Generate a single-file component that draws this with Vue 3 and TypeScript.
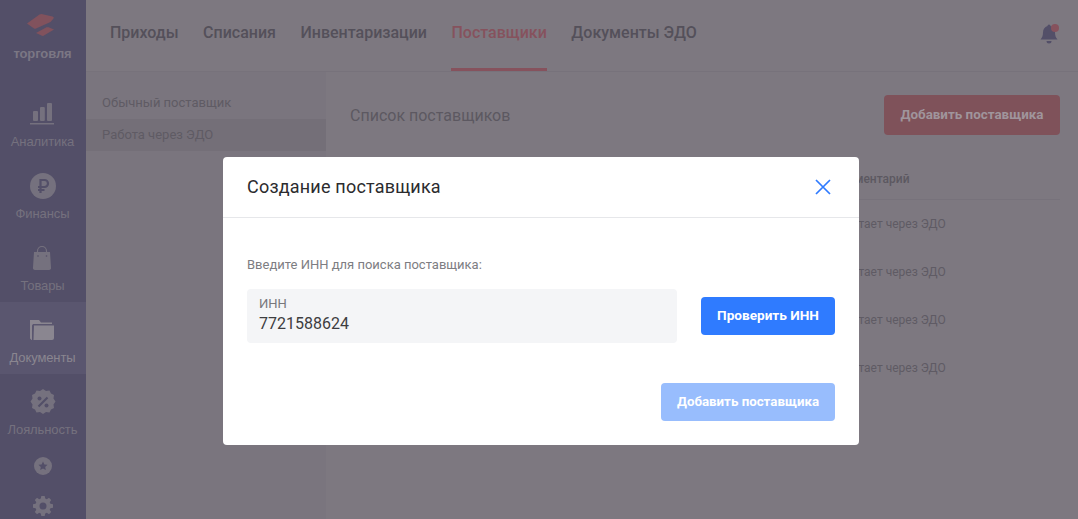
<script setup lang="ts">
const tabs = [
  { label: 'Приходы', active: false },
  { label: 'Списания', active: false },
  { label: 'Инвентаризации', active: false },
  { label: 'Поставщики', active: true },
  { label: 'Документы ЭДО', active: false },
]
const nav = [
  { label: 'Аналитика', icon: 'bars', active: false },
  { label: 'Финансы', icon: 'coin', active: false },
  { label: 'Товары', icon: 'bag', active: false },
  { label: 'Документы', icon: 'folder', active: true },
  { label: 'Лояльность', icon: 'percent', active: false },
]
const rows = [1, 2, 3, 4]
</script>

<template>
  <div class="app">
    <aside class="sidebar">
      <div class="logo">
        <svg width="36" height="36" viewBox="0 0 36 36">
          <path d="M2 11.500 L14.500 2.500 Q15.500 2 16.500 2 L27.500 4.500 Q29.500 5 28.500 6.500 L25.500 10 L11 16.500 Q10 17 9 16.500 Z" fill="#81525d" />
          <path d="M11 21 L21.500 15.300 Q22.500 15 23.500 15.300 L29 17.500 L18.500 23.800 Q18 24 17 23.800 Z" fill="#81525d" />
        </svg>
        <span class="logo-text">торговля</span>
      </div>
      <nav class="nav">
        <a v-for="item in nav" :key="item.label" class="nav-item" :class="{ active: item.active }">
          <svg v-if="item.icon === 'bars'" width="26" height="26" viewBox="0 0 26 26" class="nav-icon">
            <rect x="3" y="10" width="5" height="10" rx="1" />
            <rect x="10" y="6" width="4.800" height="14" rx="1" />
            <rect x="17" y="2" width="5" height="18" rx="1" />
            <rect x="0" y="22" width="24" height="1.500" />
          </svg>
          <svg v-else-if="item.icon === 'coin'" width="26" height="26" viewBox="0 0 26 26" class="nav-icon">
            <circle cx="13" cy="13" r="13" />
            <path d="M10.500 20V7h4a3.500 3.500 0 0 1 0 7H8M8 17h6.500" fill="none" stroke="#534f68" stroke-width="2.200" />
          </svg>
          <svg v-else-if="item.icon === 'bag'" width="26" height="26" viewBox="0 0 26 26" class="nav-icon">
            <path d="M7.500 7V6a4.500 4.500 0 0 1 9 0V7" fill="none" stroke="currentColor" stroke-width="1.200" />
            <path d="M4 7h16l1 15.500a2 2 0 0 1-2 2.500H5a2 2 0 0 1-2-2.500z" />
            <circle cx="8" cy="11" r=".8" fill="#534f68" />
            <circle cx="16.500" cy="11" r=".8" fill="#534f68" />
          </svg>
          <svg v-else-if="item.icon === 'folder'" width="26" height="26" viewBox="0 0 26 26" class="nav-icon">
            <path d="M0 3h9l2 2.500h11V7H3L2 8.500V23H1.500L0 21.500z" />
            <path d="M4 8.500h20v12.500a2 2 0 0 1-2 2H3.500z" />
          </svg>
          <svg v-else width="26" height="26" viewBox="0 0 26 26" class="nav-icon">
            <path d="M13 0l3 2 3.500-.500 1.500 3 3 1.500-.500 3.500 2 3-2 3 .500 3.500-3 1.500-1.500 3-3.500-.500-3 2-3-2-3.500.500-1.500-3-3-1.500.500-3.500-2-3 2-3-.500-3.500 3-1.500 1.500-3 3.500.500z" />
            <path d="M17.500 8.500l-9 9" stroke="#534f68" stroke-width="2.200" />
            <circle cx="9.500" cy="9.500" r="2" fill="#534f68" />
            <circle cx="16.500" cy="16.500" r="2" fill="#534f68" />
          </svg>
          <span class="nav-label">{{ item.label }}</span>
        </a>
      </nav>
      <div class="nav-extra">
        <svg width="18" height="18" viewBox="0 0 18 18" class="nav-icon">
          <circle cx="9" cy="9" r="9" />
          <path d="M9 4.500l1.400 2.900 3.100.4-2.300 2.200.6 3.100L9 11.600l-2.800 1.500.6-3.100-2.300-2.200 3.100-.4z" fill="#534f68" />
        </svg>
        <svg width="20" height="20" viewBox="0 0 20 20" class="nav-icon">
          <path fill-rule="evenodd" d="M8.300 0h3.400l.5 2.600 1.600.7 2.200-1.500 2.200 2.200-1.500 2.200.7 1.600 2.600.5v3.400l-2.600.5-.7 1.600 1.500 2.200-2.200 2.200-2.200-1.500-1.600.7-.5 2.600H8.300l-.5-2.600-1.600-.7-2.200 1.500-2.200-2.200 1.500-2.200-.7-1.600L0 11.700V8.300l2.600-.5.7-1.600-1.500-2.200L4 1.800l2.200 1.500 1.600-.7zM10 6.500a3.500 3.500 0 1 0 0 7 3.500 3.500 0 0 0 0-7z" />
        </svg>
      </div>
    </aside>

    <div class="content">
      <header class="topbar">
        <div class="tabs">
          <a v-for="tab in tabs" :key="tab.label" class="tab" :class="{ active: tab.active }">{{ tab.label }}</a>
        </div>
        <div class="bell">
          <svg width="20" height="22" viewBox="0 0 20 22">
            <path d="M10 1.500a1.500 1.500 0 0 1 1.500 1.500c3 .8 4.500 3.500 4.500 6.500 0 3 .8 5 2.500 7H1.500c1.700-2 2.500-4 2.500-7 0-3 1.500-5.700 4.500-6.500A1.500 1.500 0 0 1 10 1.500z" fill="#534f68" />
            <path d="M7.500 18h5a2.500 2.500 0 0 1-5 0z" fill="#534f68" />
          </svg>
          <span class="bell-dot"></span>
        </div>
      </header>
      <div class="body">
        <aside class="submenu">
          <a class="sub-item">Обычный поставщик</a>
          <a class="sub-item active">Работа через ЭДО</a>
        </aside>
        <main class="main">
          <div class="main-head">
            <h2 class="main-title">Список поставщиков</h2>
            <button class="add-btn">Добавить поставщика</button>
          </div>
          <div class="table">
            <div class="table-head">Комментарий</div>
            <div v-for="r in rows" :key="r" class="table-row">Работает через ЭДО</div>
          </div>
        </main>
      </div>
    </div>

    <div class="overlay">
      <section class="modal">
        <header class="modal-head">
          <h3 class="modal-title">Создание поставщика</h3>
          <svg class="close" width="16" height="16" viewBox="0 0 16 16">
            <path d="M1 1l14 14M15 1L1 15" stroke="#2f7bff" stroke-width="1.700" fill="none" />
          </svg>
        </header>
        <div class="modal-body">
          <p class="prompt">Введите ИНН для поиска поставщика:</p>
          <div class="inn-row">
            <div class="field">
              <span class="field-label">ИНН</span>
              <span class="field-value">7721588624</span>
            </div>
            <button class="btn primary">Проверить ИНН</button>
          </div>
          <div class="modal-foot">
            <button class="btn disabled">Добавить поставщика</button>
          </div>
        </div>
      </section>
    </div>
  </div>
</template>

<style>
html, body { margin: 0; height: 100%; overflow: hidden; }
</style>

<style scoped>
.app {
  display: flex;
  height: 519px;
  overflow: hidden;
  font-family: Roboto, "Liberation Sans", sans-serif;
  background: #7d7880;
  position: relative;
}
.sidebar {
  width: 86px;
  flex: none;
  background: #534f68;
  display: flex;
  flex-direction: column;
  color: #75717e;
}
.logo {
  height: 86px;
  flex: none;
  display: flex;
  flex-direction: column;
  align-items: center;
  padding: 12px 1px 0 0;
  box-sizing: border-box;
}
.logo-text {
  font: 700 13px/14px "Liberation Sans", sans-serif;
  color: #7b7784;
  margin-top: -1px;
  letter-spacing: -.1px;
}
.nav { display: flex; flex-direction: column; }
.nav-item {
  height: 72px;
  display: flex;
  flex-direction: column;
  align-items: center;
  padding-top: 15px;
  box-sizing: border-box;
}
.nav-item.active { background: #5a566f; color: #8a8690; }
.nav-icon { fill: currentColor; flex: none; display: block; }
.nav-label {
  font: 400 13px/16px "Liberation Sans", sans-serif;
  margin: 7px 1px 0 0;
  letter-spacing: -.1px;
}
.nav-extra {
  display: flex;
  flex-direction: column;
  align-items: center;
  gap: 21px;
  padding-top: 11px;
}
.content { flex: 1; display: flex; flex-direction: column; min-width: 0; }
.topbar {
  height: 72px;
  box-sizing: border-box;
  flex: none;
  border-bottom: 1px solid #77727b;
  display: flex;
  justify-content: space-between;
  padding: 0 18px 0 24px;
}
.tabs { display: flex; gap: 24.500px; }
.tab {
  height: 71px;
  box-sizing: border-box;
  line-height: 65px;
  font-size: 16px;
  font-weight: 500;
  color: #54505a;
  border-bottom: 3px solid transparent;
}
.tab.active { color: #86525d; border-bottom-color: #86525d; }
.bell { position: relative; width: 22px; box-sizing: border-box; padding: 23px 0 0 1px; }
.bell-dot {
  position: absolute;
  right: 1px;
  top: 24px;
  width: 8px;
  height: 8px;
  border-radius: 50%;
  background: #86525d;
}
.body { flex: 1; display: flex; min-height: 0; }
.submenu {
  width: 240px;
  flex: none;
  background: #7a757e;
  padding-top: 15px;
  display: flex;
  flex-direction: column;
}
.sub-item {
  height: 32px;
  line-height: 32px;
  padding-left: 16px;
  font-size: 13px;
  color: #5f5b64;
}
.sub-item.active { background: #746f78; }
.main { flex: 1; padding: 23px 18px 0 24px; min-width: 0; display: flex; flex-direction: column; }
.main-head { display: flex; justify-content: space-between; align-items: center; height: 40px; }
.main-title { margin: 0; font-size: 16px; font-weight: 400; color: #5c5861; }
.add-btn {
  width: 176px;
  height: 40px;
  border: 0;
  border-radius: 4px;
  background: #7f525a;
  color: #a0959c;
  font: 700 13.400px Roboto, sans-serif;
  padding: 0 0 1px;
}
.table { margin-top: 17px; }
.table-head {
  padding: 20px 0 13px 481px;
  line-height: 14px;
  font-size: 12px;
  font-weight: 500;
  color: #5c5861;
  border-bottom: 1px solid #77727b;
}
.table-row {
  height: 48px;
  line-height: 48px;
  font-size: 12px;
  color: #5f5b64;
  padding-left: 481px;
}
.overlay {
  position: absolute;
  inset: 0;
  padding: 157px 0 0 223px;
  box-sizing: border-box;
}
.modal {
  width: 636px;
  height: 288px;
  background: #fff;
  border-radius: 4px;
  box-sizing: border-box;
}
.modal-head {
  height: 61px;
  box-sizing: border-box;
  border-bottom: 1px solid #e6e7ea;
  display: flex;
  align-items: center;
  justify-content: space-between;
  padding: 0 28px 0 24px;
}
.modal-title { margin: 0 0 2px; font-size: 18px; font-weight: 400; color: #2b2b2e; letter-spacing: .2px; }
.close { display: block; }
.modal-body { padding: 39px 24px 0; }
.prompt { margin: 0; font-size: 13px; line-height: 16px; color: #7d7d82; }
.inn-row { display: flex; align-items: center; gap: 24px; margin-top: 16px; }
.field {
  width: 430px;
  height: 54px;
  box-sizing: border-box;
  background: #f4f5f7;
  border-radius: 4px;
  padding: 7px 12px 0;
  display: flex;
  flex-direction: column;
}
.field-label { font-size: 13px; line-height: 15px; color: #77777c; }
.field-value { font-size: 16px; line-height: 20px; color: #3d3d40; margin-top: 3px; }
.btn {
  height: 38px;
  border: 0;
  border-radius: 4px;
  color: #fff;
  font: 700 13px Roboto, sans-serif;
  padding: 0 0 2px;
}
.btn.primary { width: 134px; background: #2f7bff; font-size: 13.600px; }
.btn.disabled { width: 174px; background: #98bdfd; font-size: 13.300px; }
.modal-foot { display: flex; justify-content: flex-end; margin-top: 40px; }
</style>
